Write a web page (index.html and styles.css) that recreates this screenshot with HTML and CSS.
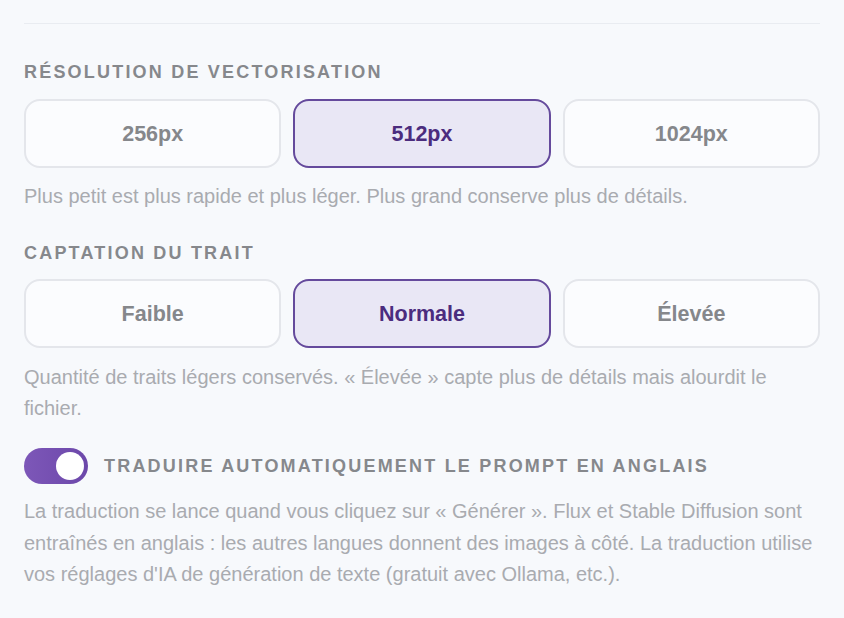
FILE: index.html
```html
<!DOCTYPE html>
<html lang="fr">
<head>
<meta charset="utf-8">
<link rel="stylesheet" href="styles.css">
</head>
<body>
<div class="panel">
  <div class="divider"></div>

  <section class="group first">
    <h3 class="label">Résolution de vectorisation</h3>
    <div class="options">
      <button class="opt">256px</button>
      <button class="opt active">512px</button>
      <button class="opt">1024px</button>
    </div>
    <p class="hint">Plus petit est plus rapide et plus léger. Plus grand conserve plus de détails.</p>
  </section>

  <section class="group second">
    <h3 class="label">Captation du trait</h3>
    <div class="options">
      <button class="opt">Faible</button>
      <button class="opt active">Normale</button>
      <button class="opt">Élevée</button>
    </div>
    <p class="hint">Quantité de traits légers conservés. « Élevée » capte plus de détails mais alourdit le fichier.</p>
  </section>

  <section class="group third">
    <div class="toggle-row">
      <span class="switch on"><span class="knob"></span></span>
      <span class="label toggle-label">Traduire automatiquement le prompt en anglais</span>
    </div>
    <p class="hint desc">La traduction se lance quand vous cliquez sur « Générer ». Flux et Stable Diffusion sont entraînés en anglais : les autres langues donnent des images à côté. La traduction utilise vos réglages d'IA de génération de texte (gratuit avec Ollama, etc.).</p>
  </section>
</div>
</body>
</html>
```

FILE: styles.css
```css
* { box-sizing: border-box; }

html, body {
  margin: 0;
  padding: 0;
  background: #f7f9fc;
}

body {
  font-family: "Liberation Sans", Arial, sans-serif;
}

.panel {
  padding: 23px 24px 0 24px;
  display: flex;
  flex-direction: column;
}

.divider {
  height: 1px;
  background: #e9ecf1;
}

.group {
  display: flex;
  flex-direction: column;
}

.first { margin-top: 37px; }
.second { margin-top: 30px; }
.third { margin-top: 24px; }

.label {
  margin: 0;
  font-size: 18px;
  line-height: 22px;
  font-weight: 700;
  letter-spacing: 2.2px;
  text-transform: uppercase;
  color: #86888c;
}

.options {
  margin-top: 16px;
  display: grid;
  grid-template-columns: repeat(3, 1fr);
  gap: 12px;
}

.second .options { margin-top: 15px; }

.opt {
  height: 69px;
  border: 2px solid #e4e6eb;
  border-radius: 16px;
  background: #fbfcfe;
  font-family: "Liberation Sans", Arial, sans-serif;
  font-size: 21.5px;
  font-weight: 700;
  color: #85878b;
  padding: 2px 0 0 0;
}

.opt.active {
  border-color: #654a9c;
  background: #e9e7f5;
  color: #4b2c7e;
}

.hint {
  margin: 13px 0 0 0;
  font-size: 20px;
  line-height: 31px;
  color: #a9abb0;
}

.second .hint { margin-top: 14px; }

.toggle-row {
  display: flex;
  align-items: center;
  gap: 16px;
}

.switch {
  position: relative;
  width: 64px;
  height: 36px;
  border-radius: 18px;
  background: linear-gradient(90deg, #7d57b8, #6c48aa);
  flex: none;
}

.knob {
  position: absolute;
  top: 4px;
  right: 4px;
  width: 28px;
  height: 28px;
  border-radius: 50%;
  background: #ffffff;
}

.toggle-label {
  font-size: 18px;
}

.desc {
  margin-top: 12px;
  line-height: 31.5px;
}
```
